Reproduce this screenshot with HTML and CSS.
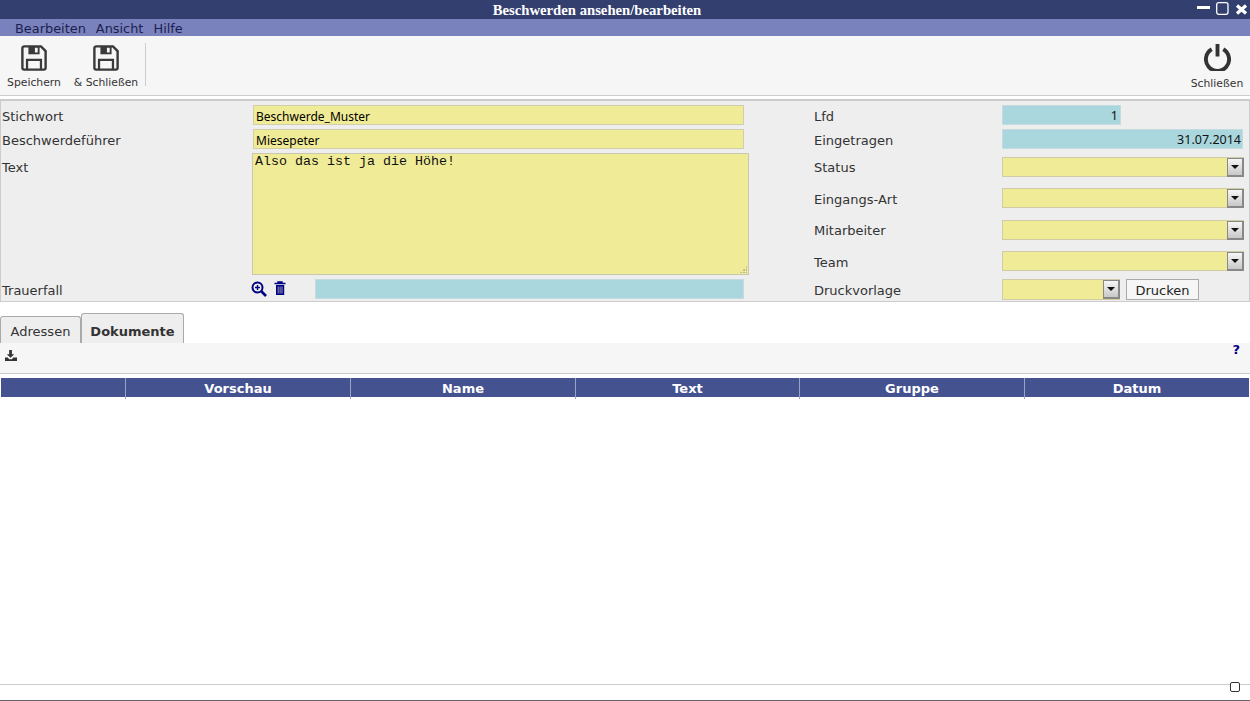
FILE: index.html
```html
<!DOCTYPE html>
<html lang="de">
<head>
<meta charset="utf-8">
<title>Beschwerden ansehen/bearbeiten</title>
<link rel="stylesheet" href="styles.css">
</head>
<body>
<div class="window">
  <header class="titlebar">
    <span class="title">Beschwerden ansehen/bearbeiten</span>
    <div class="winctl">
      <svg width="13" height="10" viewBox="0 0 13 10"><rect x="0" y="4" width="13" height="3" fill="#fff"/></svg>
      <svg width="13" height="13" viewBox="0 0 13 13"><rect x="0.700" y="0.700" width="11.300" height="11.600" rx="2" fill="none" stroke="#fff" stroke-width="1.300"/></svg>
      <svg width="13" height="13" viewBox="0 0 13 13"><path d="M2 3.500l9 8M11 3.500l-9 8" stroke="#fff" stroke-width="3.300" fill="none"/></svg>
    </div>
  </header>
  <nav class="menubar"><span>Bearbeiten</span><span>Ansicht</span><span>Hilfe</span></nav>
  <div class="toolbar">
    <div class="tool tool-save">
      <svg width="26" height="26" viewBox="0 0 28 28"><path d="M3.500 1.500h18l5 5v18a2 2 0 0 1-2 2h-21a2 2 0 0 1-2-2v-21a2 2 0 0 1 2-2z" fill="none" stroke="#3a3a3a" stroke-width="2.600"/><rect x="8" y="2" width="12" height="8" fill="#3a3a3a"/><rect x="15" y="3" width="3" height="5" fill="#f6f6f6"/><path d="M6.500 26v-10h15v10" fill="none" stroke="#3a3a3a" stroke-width="2.400"/></svg>
      <span>Speichern</span>
    </div>
    <div class="tool tool-saveclose">
      <svg width="26" height="26" viewBox="0 0 28 28"><path d="M3.500 1.500h18l5 5v18a2 2 0 0 1-2 2h-21a2 2 0 0 1-2-2v-21a2 2 0 0 1 2-2z" fill="none" stroke="#3a3a3a" stroke-width="2.600"/><rect x="8" y="2" width="12" height="8" fill="#3a3a3a"/><rect x="15" y="3" width="3" height="5" fill="#f6f6f6"/><path d="M6.500 26v-10h15v10" fill="none" stroke="#3a3a3a" stroke-width="2.400"/></svg>
      <span>&amp; Schließen</span>
    </div>
    <div class="toolsep"></div>
    <div class="tool tool-exit">
      <svg class="ico-power" width="27" height="28" viewBox="0 0 28 29"><path d="M8 6.500a12 12 0 1 0 12 0" fill="none" stroke="#333" stroke-width="4"/><path d="M14 1v13" stroke="#333" stroke-width="4" fill="none"/></svg>
      <span>Schließen</span>
    </div>
  </div>
  <form class="panel">
    <div class="col col-left">
      <label class="lbl">Stichwort</label>
      <input class="field yellow w-main" value="Beschwerde_Muster">
      <label class="lbl">Beschwerdeführer</label>
      <input class="field yellow w-main" value="Miesepeter">
      <label class="lbl lbl-text">Text</label>
      <div class="memo-wrap"><textarea class="memo">Also das ist ja die Höhe!</textarea></div>
      <label class="lbl">Trauerfall</label>
      <div class="refrow">
        <svg class="ico-zoom" width="16" height="16" viewBox="0 0 16 16"><circle cx="6.500" cy="6.500" r="5" fill="none" stroke="#000080" stroke-width="2"/><path d="M10.500 10.500l4.500 4.500" stroke="#000080" stroke-width="2.600"/><path d="M4 6.500h5M6.500 4v5" stroke="#000080" stroke-width="1.400"/></svg>
        <svg class="ico-trash" width="14" height="15" viewBox="0 0 14 15"><path d="M1.500 2.500h11M5 2.500V1h4v1.500" fill="none" stroke="#000080" stroke-width="1.400"/><path d="M3 4h8.200v10H3z" fill="#000080"/><path d="M5.200 5.500v7M7.100 5.500v7M9 5.500v7" stroke="#aab" stroke-width="0.900"/></svg>
        <div class="field cyan refbox"></div>
      </div>
    </div>
    <div class="col col-right">
      <label class="lbl">Lfd</label>
      <div class="field cyan num w-lfd">1</div>
      <label class="lbl">Eingetragen</label>
      <div class="field cyan num w-date">31.07.2014</div>
      <label class="lbl lbl-tight">Status</label>
      <div class="combo"><i class="arrow"></i></div>
      <label class="lbl">Eingangs-Art</label>
      <div class="combo"><i class="arrow"></i></div>
      <label class="lbl lbl-tight">Mitarbeiter</label>
      <div class="combo"><i class="arrow"></i></div>
      <label class="lbl">Team</label>
      <div class="combo"><i class="arrow"></i></div>
      <label class="lbl">Druckvorlage</label>
      <div class="printrow">
        <div class="combo combo-small"><i class="arrow"></i></div>
        <button type="button" class="btn">Drucken</button>
      </div>
    </div>
  </form>
  <div class="tabs">
    <div class="tab">Adressen</div>
    <div class="tab tab-active">Dokumente</div>
  </div>
  <div class="subbar">
    <svg class="ico-dl" width="12" height="12" viewBox="0 0 13 13"><path d="M4.500 0h3v4.500H10L6 8.500 2 4.500h2.500z" fill="#333"/><path d="M0 8h3l1.500 2h3L9 8h4v4H0z" fill="#333"/></svg>
    <span class="help">?</span>
  </div>
  <div class="grid">
    <div class="th"></div>
    <div class="th">Vorschau</div>
    <div class="th">Name</div>
    <div class="th">Text</div>
    <div class="th">Gruppe</div>
    <div class="th">Datum</div>
  </div>
  <div class="gridbody"></div>
  <footer class="statusbar"><span class="sq"></span></footer>
</div>
</body>
</html>
```
FILE: styles.css
```css
* { box-sizing: border-box; }
html, body { margin: 0; height: 100%; background: #fff; overflow: hidden; }
body { font-family: "DejaVu Sans", sans-serif; font-size: 13px; color: #333; }
.window { height: 701px; display: flex; flex-direction: column; }

.titlebar { height: 19px; background: #333f6f; display: flex; justify-content: center; align-items: center; position: relative; padding-right: 56px; }
.title { font-family: "Liberation Serif", serif; font-weight: bold; font-size: 14.700px; color: #fff; line-height: 19px; position: relative; top: 1px; }
.winctl { position: absolute; right: 2px; top: 2px; display: flex; gap: 6px; align-items: flex-start; }
.winctl svg { display: block; }

.menubar { height: 17px; background: #7a82bd; display: flex; gap: 10px; padding-left: 15px; line-height: 19px; font-size: 12.900px; color: #1a1f50; }

.toolbar { height: 60px; background: #f6f6f6; display: flex; position: relative; border-bottom: 1px solid #ccc; }
.tool { display: flex; flex-direction: column; align-items: center; font-size: 10.800px; color: #333; padding-top: 9px; }
.tool svg { display: block; margin-bottom: 5px; }
.tool span { line-height: 13px; white-space: nowrap; }
.tool-save { width: 68px; }
.tool-saveclose { width: 76px; }
.toolsep { width: 1px; height: 43px; background: #ccc; margin: 7px 0 0 1px; }
.tool-exit { margin-left: auto; width: 66px; padding-top: 7px; }
.tool .ico-power { margin-bottom: 6px; }

.panel { margin-top: 3px; height: 203px; background: #eee; border: 1px solid #ccc; border-top-width: 2px; display: flex; padding: 4px 0 0 1px; }
.col { display: grid; align-items: start; }
.col-left { width: 812px; grid-template-columns: 251px 1fr; grid-template-rows: 24px 24px 126px 21px; }
.col-right { flex: 1; grid-template-columns: 188px 1fr; grid-template-rows: 24px 28px 31px 32px 31px 28px 21px; }
.lbl { line-height: 20px; padding-top: 2px; font-size: 13px; color: #333; }
.lbl-text { padding-top: 5px; }
.lbl-tight { padding-top: 1px; }

.field { height: 20px; border: 1px solid #d2cfa8; display: block; margin: 0; font-family: "Noto Sans", sans-serif; font-size: 12px; color: #000; padding: 2px 2px 0; line-height: 18px; outline: 0; }
.yellow { background: #f0eb96; }
.cyan { background: #aad6de; border-color: #c4dbe0; }
.w-main { width: 491px; }
.num { text-align: right; font-size: 12.500px; padding: 0 1px 0 0; line-height: 19px; color: #111; }
.w-lfd { width: 119px; padding-right: 2px; }
.w-date { width: 241px; }
.memo-wrap { position: relative; width: 497px; height: 122px; margin-left: -1px; }
.memo-wrap::after { content: ""; position: absolute; right: 2px; bottom: 2px; width: 7px; height: 7px; background: radial-gradient(circle at 1px 1px, #b5b39a 1px, transparent 1px) 0 0 / 3px 3px; clip-path: polygon(100% 0, 100% 100%, 0 100%); }
.memo { display: block; width: 100%; height: 100%; resize: none; background: #f0eb96; border: 1px solid #c9c7ae; font-family: "Liberation Mono", monospace; font-size: 13.333px; line-height: 15px; color: #111; padding: 0 2px; outline: 0; }
.refrow { display: flex; align-items: flex-start; height: 21px; margin-left: -1px; }
.ico-zoom { margin: 2px 0 0 -1px; }
.ico-trash { margin: 2px 0 0 6px; }
.refbox { width: 429px; margin-left: 28px; }

.combo { width: 242px; height: 20px; background: #f0eb96; border: 1px solid #cfcca6; position: relative; }
.arrow { position: absolute; right: -1px; top: 0; width: 17px; height: 19px; background: linear-gradient(#f6f6f6, #c8c8c8); border: 1px solid #888; border-width: 1px 2px 2px 1px; }
.arrow::after { content: ""; position: absolute; left: 3px; top: 6px; border: 4px solid transparent; border-top: 4px solid #111; border-bottom: 0; }
.printrow { display: flex; gap: 6px; }
.combo-small { width: 118px; height: 21px; }
.btn { width: 73px; height: 21px; padding: 1px 0 0; background: #f6f6f6; border: 1px solid #aaa; font-family: "DejaVu Sans", sans-serif; font-size: 13px; color: #222; line-height: 19px; }

.tabs { height: 41px; display: flex; align-items: flex-end; }
.tab { width: 81px; height: 27px; background: #eee; border: 1px solid #aaa; border-bottom: 0; border-radius: 3px 3px 0 0; text-align: center; line-height: 30px; font-size: 13px; }
.tab-active { width: 103px; height: 30px; font-weight: bold; line-height: 35px; }

.subbar { height: 31px; background: #f6f6f6; border-bottom: 1px solid #ccc; position: relative; }
.ico-dl { position: absolute; left: 5px; top: 7px; }
.help { position: absolute; right: 10px; top: 0; font-weight: bold; font-size: 13px; color: #000080; line-height: 14px; }

.grid { margin: 4px 1px 0; height: 19px; display: grid; grid-template-columns: 124px 225px 225px 224px 225px 1fr; background: #445290; }
.th { color: #fff; font-weight: bold; font-size: 13px; text-align: center; line-height: 21px; border-left: 1px solid #9aa2c8; }
.th:first-child { border-left: 0; }
.gridbody { height: 287px; }
.statusbar { flex: 1; border-top: 1px solid #ccc; border-bottom: 1px solid #666; position: relative; }
.sq { position: absolute; right: 10px; top: -3px; width: 10px; height: 10px; border: 1px solid #333; border-radius: 2px; background: #fff; }
```
